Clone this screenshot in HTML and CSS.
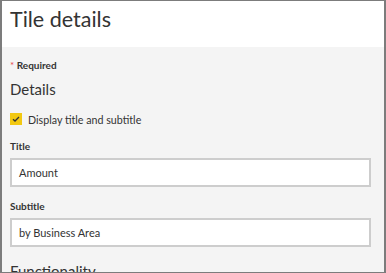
FILE: index.html
```html
<!DOCTYPE html>
<html>
<head>
<meta charset="utf-8">
<link rel="stylesheet" href="styles.css">
</head>
<body>
<div class="panel">
  <div class="header"><h1 class="title">Tile details</h1></div>
  <div class="content">
    <div class="required"><span class="star">*</span> Required</div>
    <h2 class="section">Details</h2>
    <label class="check-row">
      <span class="checkbox">
        <svg width="12" height="12" viewBox="0 0 12 12"><path d="M3 6.2 L5 8 L9 4" fill="none" stroke="#333" stroke-width="1.3"/></svg>
      </span>
      <span class="check-label">Display title and subtitle</span>
    </label>
    <div class="field-label">Title</div>
    <div class="input">Amount</div>
    <div class="field-label sub">Subtitle</div>
    <div class="input">by Business Area</div>
    <h2 class="section func">Functionality</h2>
  </div>
</div>
</body>
</html>
```
FILE: styles.css
```css
html, body { margin: 0; padding: 0; }
body { font-family: Lato, "Open Sans", sans-serif; color: #333; }
.panel {
  width: 386px; height: 273px; box-sizing: border-box;
  border: 2px solid #7c7c7c; border-top-width: 1px; border-bottom-width: 1px;
  overflow: hidden; display: flex; flex-direction: column;
}
.header { background: #fff; height: 46px; padding-left: 8px; flex: none; }
.title { margin: 0; font-weight: 400; font-size: 21.5px; line-height: 30px; padding-top: 3px; color: #333; }
.content { background: #f4f4f4; flex: 1; padding: 0 13px 0 8px; }
.required { margin-top: 11px; font-size: 10px; line-height: 14px; font-weight: 700; color: #333; }
.star { color: #e8484b; font-weight: 400; }
.section { margin: 7px 0 0; font-size: 15px; line-height: 20px; font-weight: 400; color: #333; }
.check-row { margin-top: 13px; display: flex; align-items: center; gap: 6px; height: 14px; }
.checkbox { width: 12px; height: 12px; background: #f2c811; display: flex; }
.check-label { font-size: 10.7px; color: #333; }
.field-label { margin-top: 13px; font-size: 10px; line-height: 14px; font-weight: 700; color: #333; }
.field-label.sub { margin-top: 12px; }
.input {
  margin-top: 5px; height: 29px; box-sizing: border-box; background: #fff;
  border: 2px solid #cdcdcd; padding-left: 7px; font-size: 11px; line-height: 25px; color: #333;
}
.section.func { margin-top: 14px; }
```
